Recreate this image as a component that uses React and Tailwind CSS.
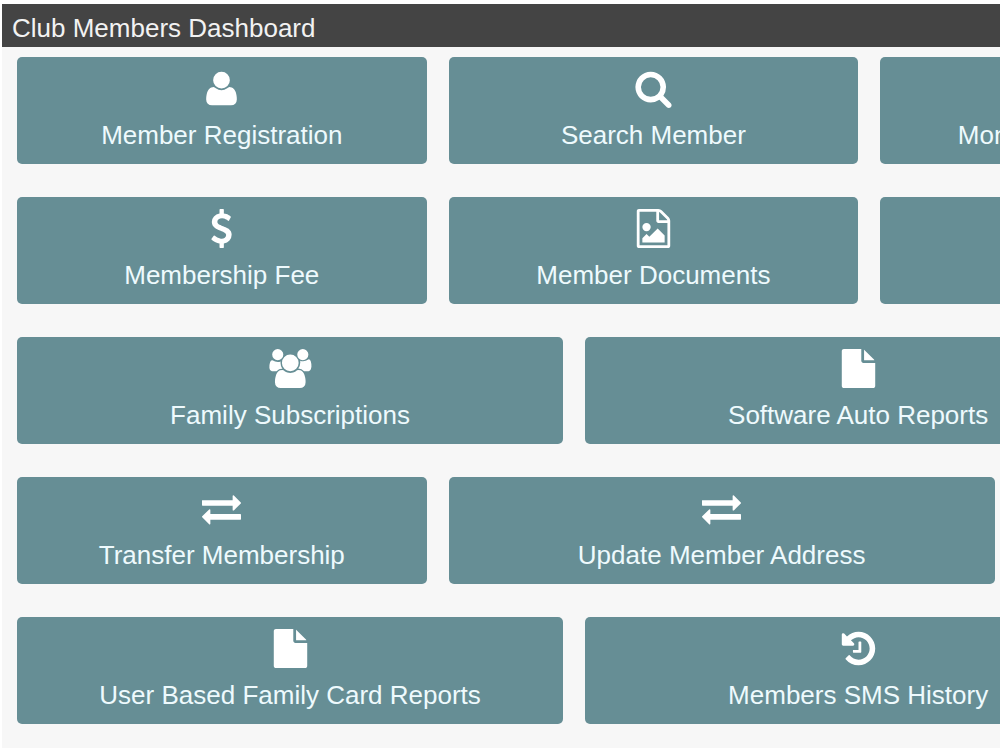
import React from 'react';

const ICONS = {
  user: {
    size: 1792,
    d: "M1600 1405q0 120-73 189.5t-194 69.5h-874q-121 0-194-69.5t-73-189.5q0-53 3.5-103.5t14-109 26.5-108.5 43-97.5 62-81 85.5-53.5 111.5-20q10 0 43 21.5t73 48 107 48 135 21.5 135-21.5 107-48 73-48 43-21.5q61 0 111.5 20t85.5 53.5 62 81 43 97.5 26.5 108.5 14 109 3.5 103.5zm-320-893q0 159-112.5 271.5t-271.5 112.5-271.5-112.5-112.5-271.5 112.5-271.5 271.5-112.5 271.5 112.5 112.5 271.5z"
  },
  search: {
    size: 1792,
    d: "M1216 832q0-185-131.5-316.5t-316.5-131.5-316.5 131.5-131.5 316.5 131.5 316.5 316.5 131.5 316.5-131.5 131.5-316.5zm512 832q0 52-38 90t-90 38q-54 0-90-38l-343-342q-179 124-399 124-143 0-273.5-55.5t-225-150-150-225-55.5-273.5 55.5-273.5 150-225 225-150 273.5-55.5 273.5 55.5 225 150 150 225 55.5 273.5q0 220-124 399l343 343q37 37 37 90z"
  },
  dollar: {
    size: 1792,
    d: "M1362 1185q0 153-99.5 263.5t-258.5 136.5v175q0 14-9 23t-23 9h-135q-13 0-22.5-9.5t-9.5-22.5v-175q-66-9-127.5-31t-101.5-44.5-74-48-46.5-37.5-17.5-18q-17-21-2-41l103-135q7-10 23-12 15-2 24 9l2 2q113 99 243 125 37 8 74 8 81 0 142.5-43t61.5-122q0-28-15-53t-33.5-42-58.5-37.5-66-32-80-32.5q-39-16-61.5-25t-61.5-26.5-62.5-31-56.5-35.5-53.5-42.5-43.5-49-35.5-58-21-66.5-8.5-78q0-138 98-242t255-134v-180q0-13 9.5-22.5t22.5-9.5h135q14 0 23 9t9 23v176q57 6 110.5 23t87 33.5 63.5 37.5 39 29 15 14q17 18 5 38l-81 146q-8 15-23 16-14 3-27-7-3-3-14.5-12t-39-26.5-58.5-32-74.5-26-85.5-11.5q-95 0-155 43t-60 111q0 26 8.5 48t29.5 41.5 39.5 33 56 31 60.5 27 70 27.5q53 20 81 31.5t76 35 75.5 42.5 62 50 53 63.5 31.5 76.5 13 94z"
  },
  image: {
    size: 1792,
    d: "M1596 380q28 28 48 76t20 88v1152q0 40-28 68t-68 28h-1344q-40 0-68-28t-28-68v-1600q0-40 28-68t68-28h896q40 0 88 20t76 48zm-444-244v376h376q-10-29-22-41l-313-313q-12-12-41-22zm384 1528v-1024h-416q-40 0-68-28t-28-68v-416h-768v1536h1280zm-128-448v320h-1024v-192l192-192 128 128 384-384zm-832-192q-80 0-136-56t-56-136 56-136 136-56 136 56 56 136-56 136-136 56z"
  },
  users: {
    size: 2048,
    d: "M657 896q-162 5-265 128h-134q-82 0-138-40.5t-56-118.5q0-353 124-353 6 0 43.5 21t97.5 42.5 119 21.5q67 0 133-23-5 37-5 66 0 159 93 292zm1071 637q0 120-73 189.5t-194 69.5h-874q-121 0-194-69.5t-73-189.5q0-53 3.5-103.5t14-109 26.5-108.5 43-97.5 62-81 85.5-53.5 111.5-20q10 0 43 21.5t73 48 107 48 135 21.5 135-21.5 107-48 73-48 43-21.5q61 0 111.5 20t85.5 53.5 62 81 43 97.5 26.5 108.5 14 109 3.5 103.5zm-1024-1277q0 106-75 181t-181 75-181-75-75-181 75-181 181-75 181 75 75 181zm704 384q0 159-112.5 271.5t-271.5 112.5-271.5-112.5-112.5-271.5 112.5-271.5 271.5-112.5 271.5 112.5 112.5 271.5zm576 225q0 78-56 118.5t-138 40.5h-134q-103-123-265-128 93-133 93-292 0-29-5-66 66 23 133 23 59 0 119-21.5t97.5-42.5 43.5-21q124 0 124 353zm-128-609q0 106-75 181t-181 75-181-75-75-181 75-181 181-75 181 75 75 181z"
  },
  file: {
    size: 1792,
    d: "M1152 512v-472q22 14 36 28l408 408q14 14 28 36h-472zm-128 32q0 40 28 68t68 28h544v1056q0 40-28 68t-68 28h-1344q-40 0-68-28t-28-68v-1600q0-40 28-68t68-28h800v544z"
  },
  exchange: {
    size: 1792,
    d: "M1792 1184v192q0 13-9.5 22.5t-22.5 9.5h-1376v192q0 13-9.5 22.5t-22.5 9.5q-12 0-24-10l-319-320q-9-9-9-22 0-14 9-23l320-320q9-9 23-9 13 0 22.5 9.5t9.5 22.5v192h1376q13 0 22.5 9.5t9.5 22.5zm0-544q0 14-9 23l-320 320q-9 9-23 9-13 0-22.5-9.5t-9.5-22.5v-192h-1376q-13 0-22.5-9.5t-9.5-22.5v-192q0-13 9.5-22.5t22.5-9.5h1376v-192q0-14 9-23t23-9q12 0 24 10l319 319q9 9 9 23z"
  },
  history: {
    size: 1792,
    d: "M1664 896q0 156-61 298t-164 245-245 164-298 61q-172 0-327-72.5t-264-204.5q-7-10-6.5-22.5t8.5-20.5l137-138q10-9 25-9 16 2 23 12 73 95 179 147t225 52q104 0 198.5-40.5t163.5-109.5 109.5-163.5 40.5-198.5-40.5-198.5-109.5-163.5-163.5-109.5-198.5-40.5q-98 0-188 35.5t-160 101.5l137 138q31 30 14 69-17 40-59 40h-448q-26 0-45-19t-19-45v-448q0-42 40-59 39-17 69 14l130 129q107-101 244.5-156.5t284.5-55.5q156 0 298 61t245 164 164 245 61 298zm-640-288v448q0 14-9 23t-23 9h-320q-14 0-23-9t-9-23v-64q0-14 9-23t23-9h224v-352q0-14 9-23t23-9h64q14 0 23 9t9 23z"
  }
};

const rows = [
  [
    { icon: 'user', label: 'Member Registration' },
    { icon: 'search', label: 'Search Member' },
    { icon: 'users', label: 'Monthly Subscriptions' }
  ],
  [
    { icon: 'dollar', label: 'Membership Fee' },
    { icon: 'image', label: 'Member Documents' },
    { icon: 'file', label: '' }
  ],
  [
    { icon: 'users', label: 'Family Subscriptions', wide: true },
    { icon: 'file', label: 'Software Auto Reports', wide: true }
  ],
  [
    { icon: 'exchange', label: 'Transfer Membership' },
    { icon: 'exchange', label: 'Update Member Address', wide: true }
  ],
  [
    { icon: 'file', label: 'User Based Family Card Reports', wide: true },
    { icon: 'history', label: 'Members SMS History', wide: true }
  ]
];

const Icon = ({ name }) => (
  <svg className="h-[39px] w-auto" viewBox={`0 0 ${ICONS[name].size} 1792`} fill="currentColor" aria-hidden="true">
    <path d={ICONS[name].d} />
  </svg>
);

const Tile = ({ icon, label, wide }) => (
  <button
    type="button"
    className={`${wide ? 'w-[32%]' : 'w-[24%]'} shrink-0 flex flex-col items-center gap-[11px] pt-3 pb-[13px] rounded-[5px] bg-[#668e95] text-white cursor-pointer hover:bg-[#5a8188]`}
  >
    <Icon name={icon} />
    <span className="h-8 text-[26px] leading-8 whitespace-nowrap text-[#eefafd]">{label}</span>
  </button>
);

const App = () => (
  <div className="pt-1 pl-0.5 pb-[3px] bg-white font-['Liberation_Sans',Arial,sans-serif]">
    <main className="bg-[#f7f7f7] overflow-hidden">
      <header className="bg-[#444444] px-[10px] pt-2 pb-[3px]">
        <h1 className="text-[26px] leading-8 text-[#f2f2f2]">Club Members Dashboard</h1>
      </header>

      {/* Tiles run past the right edge of the window */}
      <div className="w-[171%] pt-[10px] pb-6">
        <div className="flex flex-col gap-[33px]">
          {rows.map((row, i) => (
            <div key={i} className="flex gap-[22px] ml-[15px] -mr-[15px]">
              {row.map((tile, j) => (
                <Tile key={j} {...tile} />
              ))}
            </div>
          ))}
        </div>
      </div>
    </main>
  </div>
);

export default App;
